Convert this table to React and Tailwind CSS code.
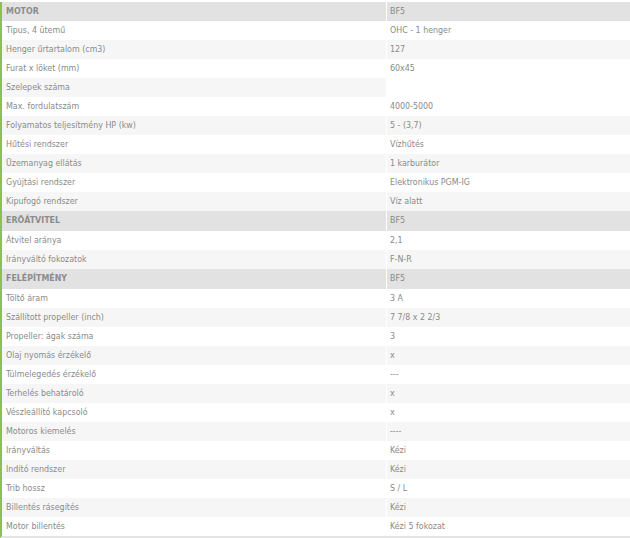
const rows = [
  { h: true, label: "MOTOR", value: "BF5" },
  { label: "Tipus, 4 ütemű", value: "OHC - 1 henger" },
  { label: "Henger űrtartalom (cm3)", value: "127" },
  { label: "Furat x löket (mm)", value: "60x45" },
  { label: "Szelepek száma", value: "" },
  { label: "Max. fordulatszám", value: "4000-5000" },
  { label: "Folyamatos teljesítmény HP (kw)", value: "5 - (3,7)" },
  { label: "Hűtési rendszer", value: "Vízhűtés" },
  { label: "Üzemanyag ellátás", value: "1 karburátor" },
  { label: "Gyújtási rendszer", value: "Elektronikus PGM-IG" },
  { label: "Kipufogó rendszer", value: "Víz alatt" },
  { h: true, label: "ERŐÁTVITEL", value: "BF5" },
  { label: "Átvitel aránya", value: "2,1" },
  { label: "Irányváltó fokozatok", value: "F-N-R" },
  { h: true, label: "FELÉPÍTMÉNY", value: "BF5" },
  { label: "Töltő áram", value: "3 A" },
  { label: "Szállított propeller (inch)", value: "7 7/8 x 2 2/3" },
  { label: "Propeller: ágak száma", value: "3" },
  { label: "Olaj nyomás érzékelő", value: "x" },
  { label: "Túlmelegedés érzékelő", value: "---" },
  { label: "Terhelés behatároló", value: "x" },
  { label: "Vészleállító kapcsoló", value: "x" },
  { label: "Motoros kiemelés", value: "----" },
  { label: "Irányváltás", value: "Kézi" },
  { label: "Indító rendszer", value: "Kézi" },
  { label: "Trib hossz", value: "S / L" },
  { label: "Billentés rásegítés", value: "Kézi" },
  { label: "Motor billentés", value: "Kézi 5 fokozat" },
];

export default function App() {
  let stripe = 0;
  return (
    <div className="h-[538px] w-[630px] bg-white pt-[2px] font-['DejaVu_Sans_Condensed','Liberation_Sans',sans-serif] text-[8.8px] text-[#8a8a8a]">
      <div className="border-b-2 border-l-2 border-b-[#e4e4e4] border-l-[#8cc152]">
        {rows.map((r, i) => {
          let bg = "bg-white";
          if (r.h) {
            stripe = 0;
            bg = "bg-[#e2e2e2]";
          } else {
            stripe++;
            bg = stripe % 2 === 0 ? "bg-[#f6f6f6]" : "bg-white";
          }
          return (
            <div
              key={i}
              className={`flex gap-px ${r.h && i > 0 ? "h-[20px]" : "h-[19px]"}`}
            >
              <div
                className={`flex w-[384px] items-center pl-1 ${bg} ${
                  r.h ? "font-bold uppercase text-[#8c8c8c]" : ""
                }`}
              >
                {r.label}
              </div>
              <div
                className={`flex flex-1 items-center pl-[3px] ${
                  r.value ? bg : "bg-white"
                }`}
              >
                {r.value}
              </div>
            </div>
          );
        })}
      </div>
    </div>
  );
}
